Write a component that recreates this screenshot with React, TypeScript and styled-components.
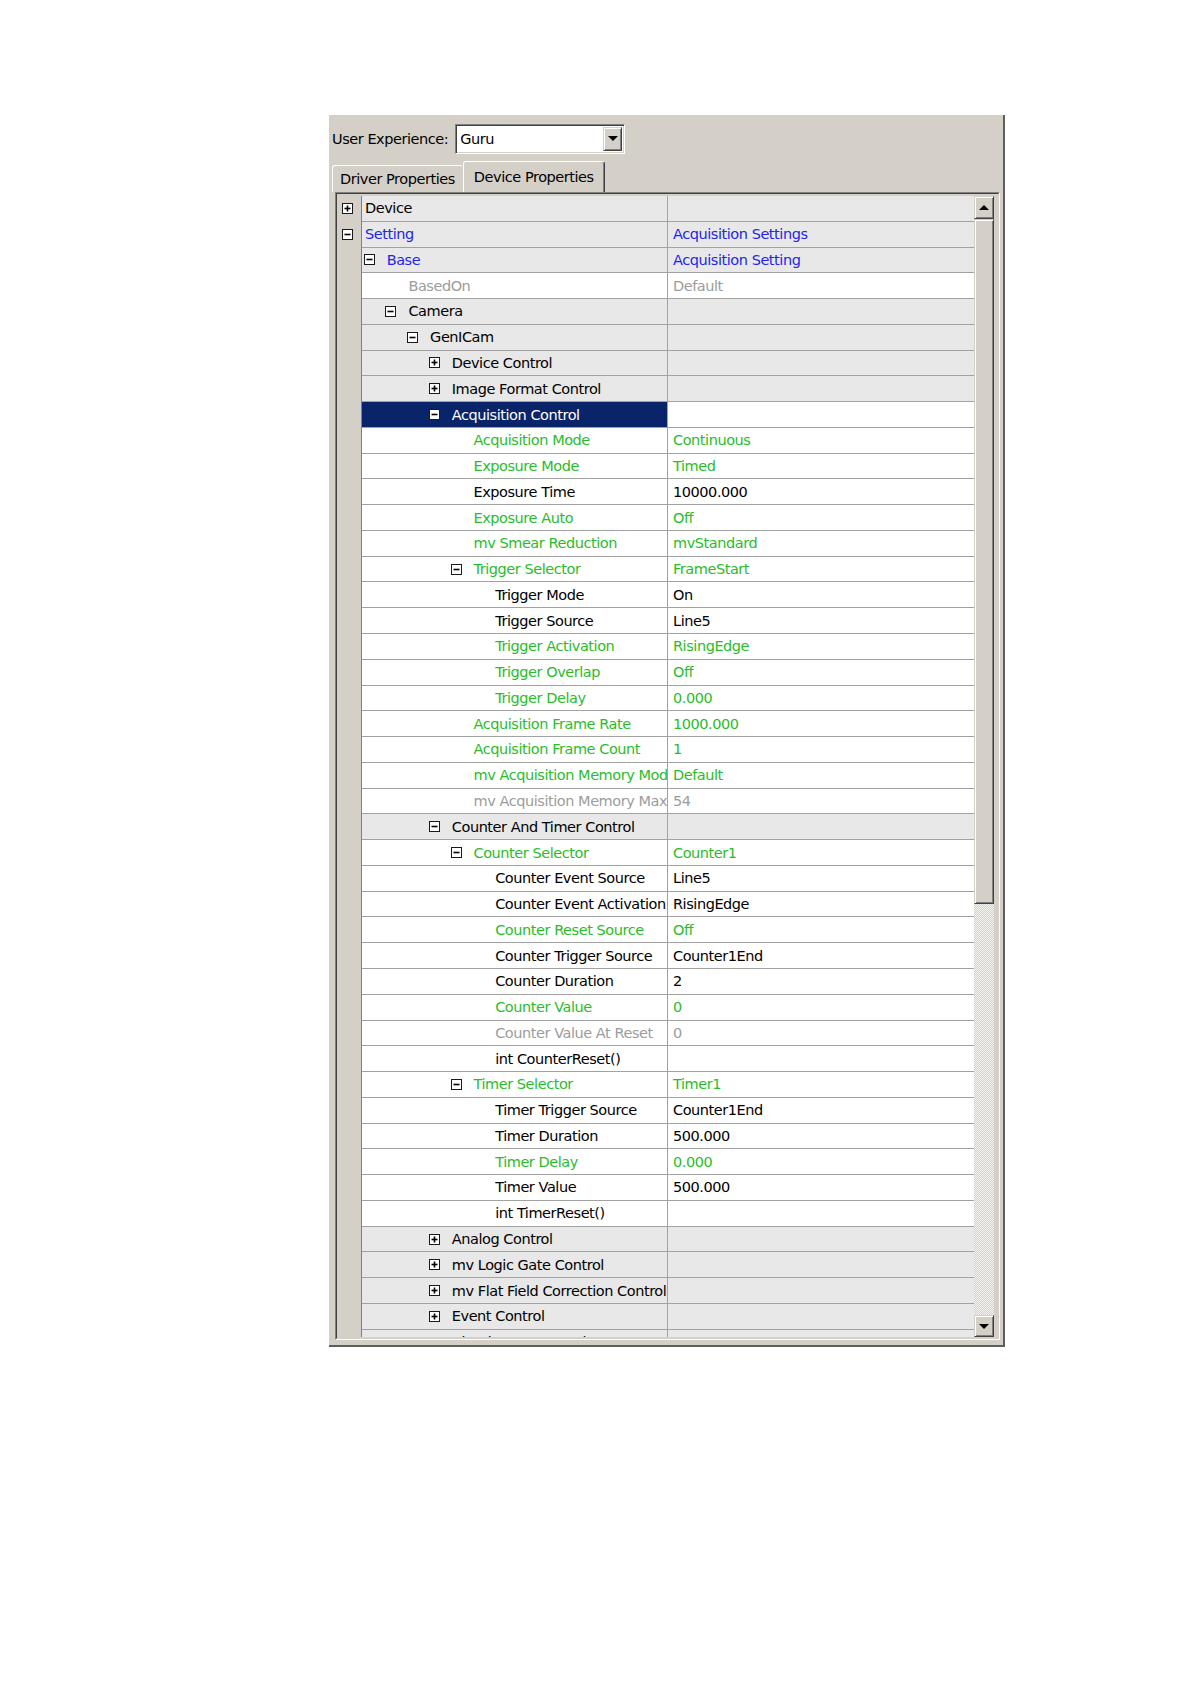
import React from 'react';
import styled, { createGlobalStyle } from 'styled-components';

const GlobalStyle = createGlobalStyle`
    html,
    body {
        margin: 0;
        padding: 0;
        background: #ffffff;
    }

    body {
        font-family: 'DejaVu Sans', Verdana, sans-serif;
    }
`;

const ROW_H = 25.77;
const INDENT = 21.7;

type Tone = 'black' | 'blue' | 'green' | 'gray';

interface IRow {
    level: number;
    label: string;
    value?: string;
    tone?: Tone;
    group?: boolean;
    toggle?: '+' | '-';
    selected?: boolean;
}

const rows: IRow[] = [
    { level: 0, label: 'Device', group: true, toggle: '+' },
    { level: 0, label: 'Setting', value: 'Acquisition Settings', tone: 'blue', group: true, toggle: '-' },
    { level: 1, label: 'Base', value: 'Acquisition Setting', tone: 'blue', group: true, toggle: '-' },
    { level: 2, label: 'BasedOn', value: 'Default', tone: 'gray' },
    { level: 2, label: 'Camera', group: true, toggle: '-' },
    { level: 3, label: 'GenICam', group: true, toggle: '-' },
    { level: 4, label: 'Device Control', group: true, toggle: '+' },
    { level: 4, label: 'Image Format Control', group: true, toggle: '+' },
    { level: 4, label: 'Acquisition Control', toggle: '-', selected: true },
    { level: 5, label: 'Acquisition Mode', value: 'Continuous', tone: 'green' },
    { level: 5, label: 'Exposure Mode', value: 'Timed', tone: 'green' },
    { level: 5, label: 'Exposure Time', value: '10000.000' },
    { level: 5, label: 'Exposure Auto', value: 'Off', tone: 'green' },
    { level: 5, label: 'mv Smear Reduction', value: 'mvStandard', tone: 'green' },
    { level: 5, label: 'Trigger Selector', value: 'FrameStart', tone: 'green', toggle: '-' },
    { level: 6, label: 'Trigger Mode', value: 'On' },
    { level: 6, label: 'Trigger Source', value: 'Line5' },
    { level: 6, label: 'Trigger Activation', value: 'RisingEdge', tone: 'green' },
    { level: 6, label: 'Trigger Overlap', value: 'Off', tone: 'green' },
    { level: 6, label: 'Trigger Delay', value: '0.000', tone: 'green' },
    { level: 5, label: 'Acquisition Frame Rate', value: '1000.000', tone: 'green' },
    { level: 5, label: 'Acquisition Frame Count', value: '1', tone: 'green' },
    { level: 5, label: 'mv Acquisition Memory Mode', value: 'Default', tone: 'green' },
    { level: 5, label: 'mv Acquisition Memory Max', value: '54', tone: 'gray' },
    { level: 4, label: 'Counter And Timer Control', group: true, toggle: '-' },
    { level: 5, label: 'Counter Selector', value: 'Counter1', tone: 'green', toggle: '-' },
    { level: 6, label: 'Counter Event Source', value: 'Line5' },
    { level: 6, label: 'Counter Event Activation', value: 'RisingEdge' },
    { level: 6, label: 'Counter Reset Source', value: 'Off', tone: 'green' },
    { level: 6, label: 'Counter Trigger Source', value: 'Counter1End' },
    { level: 6, label: 'Counter Duration', value: '2' },
    { level: 6, label: 'Counter Value', value: '0', tone: 'green' },
    { level: 6, label: 'Counter Value At Reset', value: '0', tone: 'gray' },
    { level: 6, label: 'int CounterReset()' },
    { level: 5, label: 'Timer Selector', value: 'Timer1', tone: 'green', toggle: '-' },
    { level: 6, label: 'Timer Trigger Source', value: 'Counter1End' },
    { level: 6, label: 'Timer Duration', value: '500.000' },
    { level: 6, label: 'Timer Delay', value: '0.000', tone: 'green' },
    { level: 6, label: 'Timer Value', value: '500.000' },
    { level: 6, label: 'int TimerReset()' },
    { level: 4, label: 'Analog Control', group: true, toggle: '+' },
    { level: 4, label: 'mv Logic Gate Control', group: true, toggle: '+' },
    { level: 4, label: 'mv Flat Field Correction Control', group: true, toggle: '+' },
    { level: 4, label: 'Event Control', group: true, toggle: '+' },
    { level: 4, label: 'Chunk Data Control', group: true, toggle: '+' },
];

const toneColor: Record<Tone, string> = {
    black: '#000000',
    blue: '#2424ec',
    green: '#2abc2a',
    gray: '#9c9c9c',
};

const Page = styled.div`
    padding: 115px 0 40px 329px;
`;

const Panel = styled.div`
    width: 674px;
    background: #d4d0c8;
    border-right: 2px solid #5e5e5e;
    border-bottom: 2px solid #5e5e5e;
    padding-bottom: 5px;
    font-size: 14.5px;
    letter-spacing: -0.45px;
    color: #000;
`;

const Header = styled.div`
    display: flex;
    align-items: center;
    gap: 7px;
    height: 38px;
    box-sizing: border-box;
    padding: 9px 0 0 3px;
`;

const Combo = styled.div`
    display: flex;
    align-items: center;
    width: 170px;
    height: 30px;
    box-sizing: border-box;
    padding-left: 4px;
    background: #fff;
    border: 1px solid;
    border-color: #808080 #ffffff #ffffff #808080;
    box-shadow: inset 1px 1px 0 #404040, inset -1px -1px 0 #d4d0c8;

    .combo-text {
        flex: 1;
    }
`;

const RaisedButton = styled.div<{ $h: number }>`
    display: flex;
    align-items: center;
    justify-content: center;
    height: ${({ $h }) => $h}px;
    box-sizing: border-box;
    background: #d4d0c8;
    border: 1px solid;
    border-color: #d4d0c8 #404040 #404040 #d4d0c8;
    box-shadow: inset 1px 1px 0 #ffffff, inset -1px -1px 0 #808080;
    flex-shrink: 0;
`;

const ComboButton = styled(RaisedButton)`
    width: 19px;
    margin-right: 2px;
`;

const Arrow = styled.span<{ $up?: boolean }>`
    width: 0;
    height: 0;
    border-left: 5px solid transparent;
    border-right: 5px solid transparent;
    ${({ $up }) =>
        $up ? 'border-bottom: 5px solid #000;' : 'border-top: 5px solid #000;'}
`;

const Tabs = styled.div`
    display: flex;
    align-items: flex-end;
    height: 31px;
    margin-top: 8px;
    padding-left: 3px;
`;

const Tab = styled.div<{ $active?: boolean }>`
    display: flex;
    align-items: center;
    height: ${({ $active }) => ($active ? 31 : 27)}px;
    box-sizing: border-box;
    padding: 0 ${({ $active }) => ($active ? '10px' : '7px')};
    border-top: 1px solid #ffffff;
    border-left: 1px solid #ffffff;
    border-right: 1px solid ${({ $active }) => ($active ? '#404040' : '#d4d0c8')};
    box-shadow: ${({ $active }) => ($active ? 'inset -1px 0 0 #808080' : 'none')};
    border-radius: 3px 3px 0 0;
    white-space: nowrap;
`;

const GridFrame = styled.div`
    margin-left: 6px;
    width: 665px;
    height: 1148px;
    box-sizing: border-box;
    border: 1px solid;
    border-color: #808080 #ffffff #ffffff #808080;
`;

const GridInner = styled.div`
    display: flex;
    align-items: flex-start;
    height: 100%;
    box-sizing: border-box;
    padding-top: 2px;
    border: 1px solid;
    border-color: #404040 #d4d0c8 #d4d0c8 #404040;
`;

const Sheet = styled.div`
    width: 637px;
    height: 1141px;
    overflow: hidden;
    background: #d4d0c8;
`;

const RowLine = styled.div`
    display: grid;
    grid-template-columns: 25px 306px 1fr;
    height: ${ROW_H}px;
`;

const Gutter = styled.div`
    display: flex;
    align-items: center;
    padding-left: 5px;
    box-sizing: border-box;
    border-right: 1px solid #808080;
    background: #d4d0c8;
`;

const Cell = styled.div<{ $bg: string; $color: string }>`
    display: flex;
    align-items: center;
    overflow: hidden;
    white-space: nowrap;
    box-sizing: border-box;
    border-bottom: 1px solid #a2a2a2;
    background: ${({ $bg }) => $bg};
    color: ${({ $color }) => $color};
`;

const LabelCell = styled(Cell)<{ $level: number }>`
    padding-left: ${({ $level }) => 3 + $level * INDENT}px;
    border-right: 1px solid #a2a2a2;
`;

const ValueCell = styled(Cell)`
    padding-left: 5px;
`;

const ToggleIcon = styled.svg<{ $inline?: boolean }>`
    flex-shrink: 0;
    margin-left: ${({ $inline }) => ($inline ? '-23px' : '0')};
    margin-right: ${({ $inline }) => ($inline ? '12px' : '0')};
`;

const ScrollBar = styled.div`
    display: flex;
    flex-direction: column;
    width: 20px;
    height: 1141px;
`;

const Thumb = styled(RaisedButton)``;

const Track = styled.div`
    flex: 1;
    background-color: #ffffff;
    background-image: repeating-conic-gradient(#d4d0c8 0 25%, #f4f3f0 0 50%);
    background-size: 2px 2px;
`;

const Toggle: React.FC<{ sign: '+' | '-'; inline?: boolean }> = ({ sign, inline }) => (
    <ToggleIcon $inline={inline} width="11" height="11" viewBox="0 0 11 11">
        <rect x="0.5" y="0.5" width="10" height="10" fill="#ffffff" stroke="#1a1a1a" />
        <path d="M2.5 5.5h6" stroke="#000" strokeWidth="1.6" />
        {sign === '+' && <path d="M5.5 2.5v6" stroke="#000" strokeWidth="1.6" />}
    </ToggleIcon>
);

const PropertyRow: React.FC<{ row: IRow }> = ({ row }) => {
    const bg = row.group ? '#e8e8e8' : '#ffffff';
    const color = toneColor[row.tone || 'black'];
    const top = row.level === 0;

    return (
        <RowLine>
            <Gutter>{top && row.toggle && <Toggle sign={row.toggle} />}</Gutter>
            <LabelCell
                $level={row.level}
                $bg={row.selected ? '#0a246a' : bg}
                $color={row.selected ? '#ffffff' : color}
            >
                {!top && row.toggle && <Toggle sign={row.toggle} inline />}
                {row.label}
            </LabelCell>
            <ValueCell $bg={bg} $color={color}>
                {row.value}
            </ValueCell>
        </RowLine>
    );
};

export default function App() {
    return (
        <Page>
            <GlobalStyle />
            <Panel>
                <Header>
                    <span>User Experience:</span>
                    <Combo>
                        <span className="combo-text">Guru</span>
                        <ComboButton $h={24}>
                            <Arrow />
                        </ComboButton>
                    </Combo>
                </Header>
                <Tabs>
                    <Tab>Driver Properties</Tab>
                    <Tab $active>Device Properties</Tab>
                </Tabs>
                <GridFrame>
                    <GridInner>
                        <Sheet>
                            {rows.map((row, i) => (
                                <PropertyRow key={i} row={row} />
                            ))}
                        </Sheet>
                        <ScrollBar>
                            <RaisedButton $h={23}>
                                <Arrow $up />
                            </RaisedButton>
                            <Thumb $h={685} />
                            <Track />
                            <RaisedButton $h={22}>
                                <Arrow />
                            </RaisedButton>
                        </ScrollBar>
                    </GridInner>
                </GridFrame>
            </Panel>
        </Page>
    );
}
